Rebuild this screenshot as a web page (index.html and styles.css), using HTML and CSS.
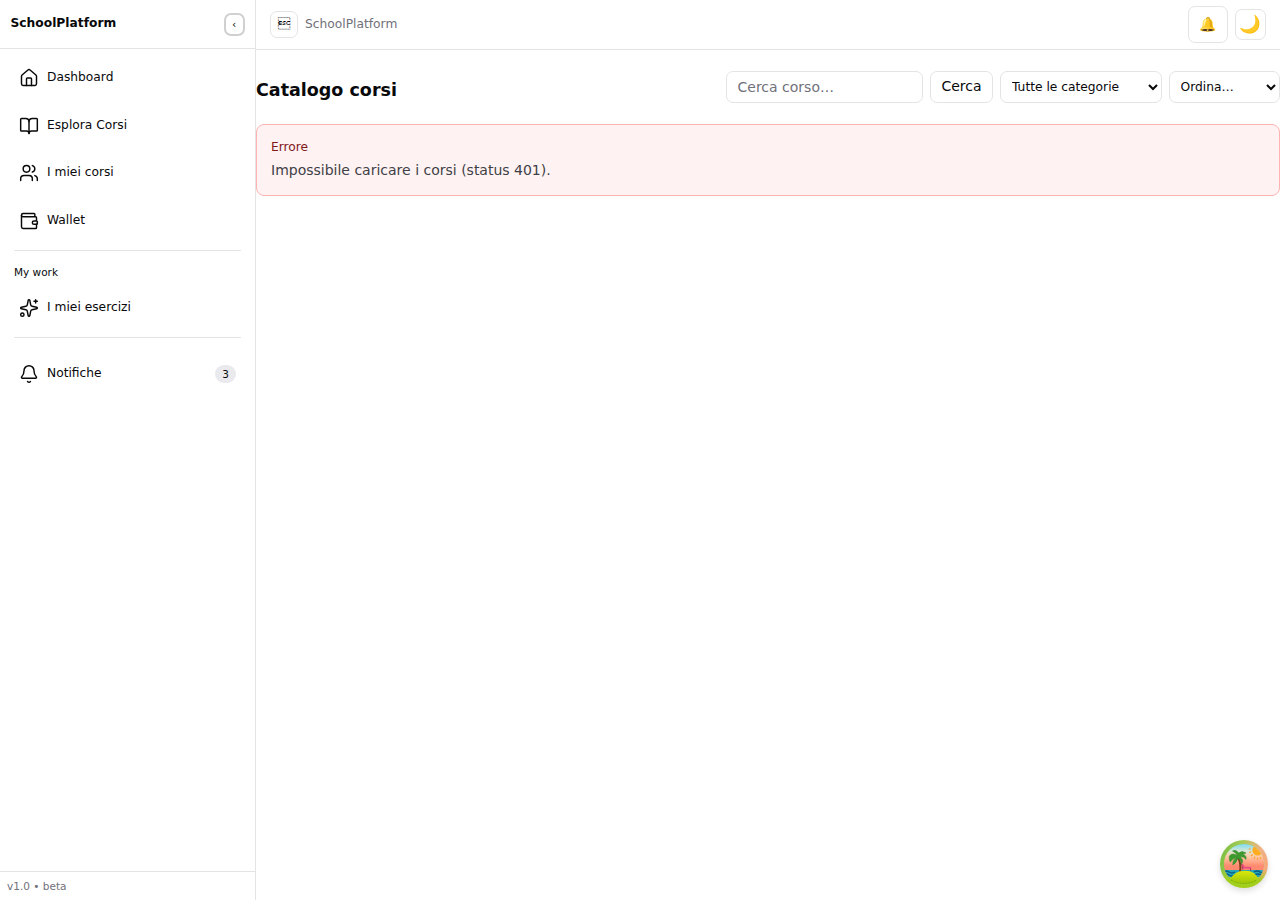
FILE: index.html
```html
<!DOCTYPE html>
<html lang="it">
<head>
<meta charset="utf-8">
<title>SchoolPlatform</title>
<link rel="stylesheet" href="styles.css">
</head>
<body>
<div class="app">
  <aside class="sidebar">
    <div class="brand"><span class="brand-name">SchoolPlatform</span><button class="collapse">‹</button></div>
    <nav class="nav">
      <a class="item"><svg class="icon" viewBox="0 0 24 24"><path d="M15 21v-8a1 1 0 0 0-1-1h-4a1 1 0 0 0-1 1v8"/><path d="M3 10a2 2 0 0 1 .709-1.528l7-5.999a2 2 0 0 1 2.582 0l7 5.999A2 2 0 0 1 21 10v9a2 2 0 0 1-2 2H5a2 2 0 0 1-2-2z"/></svg><span class="label">Dashboard</span></a>
      <a class="item"><svg class="icon" viewBox="0 0 24 24"><path d="M12 7v14"/><path d="M3 18a1 1 0 0 1-1-1V4a1 1 0 0 1 1-1h5a4 4 0 0 1 4 4 4 4 0 0 1 4-4h5a1 1 0 0 1 1 1v13a1 1 0 0 1-1 1h-6a3 3 0 0 0-3 3 3 3 0 0 0-3-3z"/></svg><span class="label">Esplora Corsi</span></a>
      <a class="item"><svg class="icon" viewBox="0 0 24 24"><path d="M16 21v-2a4 4 0 0 0-4-4H6a4 4 0 0 0-4 4v2"/><path d="M16 3.128a4 4 0 0 1 0 7.744"/><path d="M22 21v-2a4 4 0 0 0-3-3.87"/><circle cx="9" cy="7" r="4"/></svg><span class="label">I miei corsi</span></a>
      <a class="item"><svg class="icon" viewBox="0 0 24 24"><path d="M19 7V4a1 1 0 0 0-1-1H5a2 2 0 0 0 0 4h15a1 1 0 0 1 1 1v4h-3a2 2 0 0 0 0 4h3a1 1 0 0 0 1-1v-2a1 1 0 0 0-1-1"/><path d="M3 5v14a2 2 0 0 0 2 2h15a1 1 0 0 0 1-1v-4"/></svg><span class="label">Wallet</span></a>
    </nav>
    <div class="divider"></div>
    <div class="section">My work</div>
    <nav class="nav work">
      <a class="item"><svg class="icon" viewBox="0 0 24 24"><path d="M11.017 2.814a1 1 0 0 1 1.966 0l1.051 5.558a2 2 0 0 0 1.594 1.594l5.558 1.051a1 1 0 0 1 0 1.966l-5.558 1.051a2 2 0 0 0-1.594 1.594l-1.051 5.558a1 1 0 0 1-1.966 0l-1.051-5.558a2 2 0 0 0-1.594-1.594l-5.558-1.051a1 1 0 0 1 0-1.966l5.558-1.051a2 2 0 0 0 1.594-1.594z"/><path d="M20 2v4"/><path d="M22 4h-4"/><circle cx="4" cy="20" r="2"/></svg><span class="label">I miei esercizi</span></a>
    </nav>
    <div class="divider"></div>
    <nav class="nav last">
      <a class="item"><svg class="icon" viewBox="0 0 24 24"><path d="M10.268 21a2 2 0 0 0 3.464 0"/><path d="M3.262 15.326A1 1 0 0 0 4 17h16a1 1 0 0 0 .74-1.673C19.41 13.956 18 12.499 18 8A6 6 0 0 0 6 8c0 4.499-1.411 5.956-2.738 7.326"/></svg><span class="label">Notifiche</span><span class="count">3</span></a>
    </nav>
    <footer class="version">v1.0 • beta</footer>
  </aside>
  <div class="content">
    <header class="topbar">
      <button class="menu">&#27;</button>
      <span class="crumb">SchoolPlatform</span>
      <button class="bell">🔔</button>
      <button class="theme">🌙</button>
    </header>
    <main>
      <div class="tools">
        <h1 class="title">Catalogo corsi</h1>
        <input class="field search" placeholder="Cerca corso…">
        <button class="field submit">Cerca</button>
        <select class="field category"><option>Tutte le categorie</option></select>
        <select class="field sort"><option>Ordina…</option></select>
      </div>
      <section class="alert"><div class="alert-title">Errore</div><p class="alert-text">Impossibile caricare i corsi (status 401).</p></section>
    </main>
  </div>
</div>
<button class="island" aria-label="Strumenti">
  <svg viewBox="0 0 48 48" width="48" height="48">
    <defs>
      <linearGradient id="ring" x1="0" y1="0.35" x2="1" y2="0.6"><stop offset="0" stop-color="#7cc043"/><stop offset=".35" stop-color="#a5cc55"/><stop offset=".75" stop-color="#eeb483"/><stop offset="1" stop-color="#f4a67c"/></linearGradient>
      <linearGradient id="base" x1="0" y1="0" x2="0" y2="1"><stop offset=".6" stop-color="#a0cf25" stop-opacity="0"/><stop offset=".85" stop-color="#a0d01c"/></linearGradient>
      <linearGradient id="sky" x1="0" y1="0" x2="0" y2="1"><stop offset=".08" stop-color="#70d8f5"/><stop offset=".3" stop-color="#d8e8d5"/><stop offset=".45" stop-color="#ffc9a4"/><stop offset=".7" stop-color="#ff8a70"/></linearGradient>
      <linearGradient id="sand" x1="0" y1="0" x2="0" y2="1"><stop offset="0" stop-color="#dce80a"/><stop offset="1" stop-color="#9cc70a"/></linearGradient>
      <clipPath id="scene"><circle cx="24" cy="24" r="20"/></clipPath>
    </defs>
    <circle cx="24" cy="24" r="24" fill="url(#ring)"/><circle cx="24" cy="24" r="24" fill="url(#base)"/>
    <g clip-path="url(#scene)">
      <path fill="url(#sky)" d="M0 0h48v37H0z"/>
      <circle cx="37.7" cy="10.3" r="5.3" fill="#ffac20"/>
      <path d="M28.7 9h2M29.2 12.5l2-.7M31 16l1.6-1.5M34 18.7l.9-2M37.6 19.8v-2M41 19l-.6-1.8" stroke="#ff9d24" stroke-width="1.1"/>
      <path fill="#25a5b8" d="M3 30h42v7H3z"/>
      <path d="M3 32q3-2 6 0t6 0M34 32q3-2 6 0t6 0M3 35q3-2 6 0t6 0M35 35q3-2 6 0t6 0" fill="none" stroke="#075f85" stroke-width="1.3"/>
      <path d="M17.5 17q4 6 2.5 15" fill="none" stroke="#803c16" stroke-width="2"/>
      <path d="M22 24l1 5.5M30.5 30.5v-2.2" fill="none" stroke="#a02b50" stroke-width="1"/>
      <path d="M22.2 24.6l2.2 2.9 6.8.3" fill="none" stroke="#e84c8a" stroke-width="1.8"/>
      <path d="M10.5 39.5Q14 30.7 25 30.7T38 39.5Q32 43.3 24.5 43.3T10.5 39.5z" fill="url(#sand)"/>
    </g>
    <path transform="translate(.7 -1)" d="M17 17q-5-4-8.4 0-.4 4 1 6 2.5-4 7-4.5-5 2-4.5 7.5 4-2 5-7 4 3 3.7 6.5 3-4.5-1.5-7.5 4-1 6 2.5 1-4.5-4-5.5 2 0 4-1-4-3-7.5 0-2-4-6-2 3 1 5.2 5z" fill="#3d9b2d" stroke="#2e852f" stroke-width=".5"/>
    <path d="M11 40q13 7 26 0" fill="none" stroke="#6f9b00" stroke-width=".7" stroke-dasharray="2 1"/>
  </svg>
</button>
</body>
</html>
```

FILE: styles.css
```css
* { box-sizing: border-box; }
html { font-size: 14px; }
body { margin: 0; background: #fff; color: #09090b; font-family: "DejaVu Sans", sans-serif; line-height: 1.5; }
button, input, select { font: inherit; color: inherit; background: #fff; margin: 0; }
.app { display: flex; height: 100vh; }
.sidebar { width: 256px; flex: none; display: flex; flex-direction: column; border-right: 1px solid #e4e4e7; }
.brand { height: 49px; display: flex; align-items: center; justify-content: space-between; padding: 0 10.5px; border-bottom: 1px solid #e4e4e7; }
.brand-name { font-size: 12.25px; font-weight: 700; line-height: 17.5px; padding-bottom: 1px; }
.collapse { width: 21px; height: 23px; padding: 0; border: 2px solid #d0d0d0; border-radius: 7px; font-size: 10.5px; line-height: 14px; }
.nav { display: flex; flex-direction: column; gap: 3.5px; padding: 7px 14px; }
.item { height: 44.1px; display: flex; align-items: center; padding: 0 5px; }
.icon { width: 20px; height: 20px; margin-right: 8px; fill: none; stroke: currentColor; stroke-width: 1.75; stroke-linecap: round; stroke-linejoin: round; }
.label { font-size: 12.25px; line-height: 17.5px; }
.divider { height: 1px; flex: none; margin: 0 14px; background: #e4e4e7; }
.section { padding: 14px 14px 0; font-size: 10.5px; line-height: 14px; }
.work { padding-top: 7px; }
.last { padding-top: 14px; }
.count { margin-left: auto; width: 21px; height: 17.5px; border-radius: 9px; background: #e9e9ee; font-size: 10.5px; line-height: 18px; text-align: center; }
.version { margin-top: auto; height: 29px; padding: 7px; border-top: 1px solid #e4e4e7; color: #71717a; font-size: 10.5px; line-height: 14px; }
.content { flex: 1; min-width: 0; }
.topbar { height: 50px; display: flex; align-items: center; padding: 0 14px; border-bottom: 1px solid #e4e4e7; }
.menu, .bell, .theme { border: 1px solid #e4e4e7; border-radius: 7px; padding: 0; }
.menu { width: 28px; height: 27px; font-size: 12.25px; line-height: 21px; }
.crumb { margin-left: 7px; margin-right: auto; color: #71717a; font-size: 12.25px; line-height: 17.5px; }
.bell { width: 40px; height: 37px; font-size: 14px; padding-right: 2px; }
.theme { width: 31px; height: 31px; margin-left: 7px; font-size: 17.5px; line-height: 24px; padding: 0 2px 2px 0; }
.tools { display: flex; gap: 7px; padding-top: 21px; height: 74px; }
.title { margin: 5px auto 0 0; font-size: 17.5px; line-height: 28px; font-weight: 700; }
.field { height: 32px; border: 1px solid #e4e4e7; border-radius: 7px; padding: 0 10.5px; }
.search { width: 197px; }
.search::placeholder { color: #71717a; }
.submit { width: 63px; padding: 0 0 1px; }
.category, .sort { font-size: 12.25px; padding: 0 0 0 7px; }
.category { width: 162px; }
.sort { width: 111px; padding-left: 6.5px; }
.alert { height: 72px; padding: 14px 14px 13px; border: 1px solid #ffb3b3; border-radius: 8px; background: #fef2f2; }
.alert-title { color: #82181a; font-size: 12.25px; line-height: 17.5px; }
.alert-text { margin: 3px 0 0; color: #3f3f46; line-height: 21px; }
.island { position: fixed; right: 12px; bottom: 12px; width: 48px; height: 48px; padding: 0; border: 0; border-radius: 50%; box-shadow: 0 3px 6px #0002; }
.island svg { display: block; }
```
